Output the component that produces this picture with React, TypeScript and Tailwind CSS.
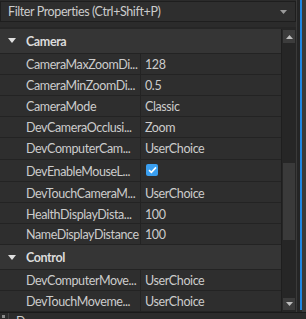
import React from "react";

type Row = { name: string; value?: string; check?: boolean; h: string };

const camera: Row[] = [
  { name: "CameraMaxZoomDi...", value: "128", h: "h-[21px]" },
  { name: "CameraMinZoomDi...", value: "0.5", h: "h-[21px]" },
  { name: "CameraMode", value: "Classic", h: "h-[21px]" },
  { name: "DevCameraOcclusi...", value: "Zoom", h: "h-[21px]" },
  { name: "DevComputerCam...", value: "UserChoice", h: "h-[22px]" },
  { name: "DevEnableMouseL...", check: true, h: "h-[23px]" },
  { name: "DevTouchCameraM...", value: "UserChoice", h: "h-[21px]" },
  { name: "HealthDisplayDista...", value: "100", h: "h-[21px]" },
  { name: "NameDisplayDistance", value: "100", h: "h-[21px]" },
];

const control: Row[] = [
  { name: "DevComputerMove...", value: "UserChoice", h: "h-[21px]" },
  { name: "DevTouchMoveme...", value: "UserChoice", h: "h-[21px]" },
];

function Header({ title }: { title: string }) {
  return (
    <div className="h-[25px] flex items-center bg-[#353535] border-b border-[#232323]">
      <svg width="8" height="5" viewBox="0 0 8 5" className="ml-[8px] mr-[10px]">
        <path d="M0 0 H8 L4 5 Z" fill="#e0e0e0" />
      </svg>
      <span className="font-bold text-[#dcdcdc] pt-[3px]">{title}</span>
    </div>
  );
}

function PropRow({ r }: { r: Row }) {
  return (
    <div className={`${r.h} flex border-b border-[#232323] bg-[#2e2e2e]`}>
      <div className="w-[141px] shrink-0 pl-[26px] pt-[3px] flex items-center border-r border-[#232323] whitespace-nowrap overflow-hidden">
        {r.name}
      </div>
      <div className={`flex-1 pl-[4px] flex items-center whitespace-nowrap ${r.check ? "" : "pt-[3px]"}`}>
        {r.check ? (
          <span className="w-[12px] h-[12px] rounded-[2px] bg-[#3a9ff0] flex items-center justify-center ml-[1px]">
            <svg width="9" height="8" viewBox="0 0 9 8">
              <path d="M1 4.2 L3.4 6.4 L8 1.4" stroke="#ffffff" strokeWidth="1.6" fill="none" />
            </svg>
          </span>
        ) : (
          r.value
        )}
      </div>
    </div>
  );
}

export default function App() {
  return (
    <div
      className="w-[306px] h-[319px] bg-[#2b2b2b] overflow-hidden flex flex-col text-[12.5px] tracking-[-0.4px] text-[#cccccc] leading-none"
      style={{ fontFamily: "Lato, 'Noto Sans', sans-serif" }}
    >
      <div className="h-[312px] flex">
        <div className="w-[296px] flex flex-col">
          <div className="mt-[1px] h-[21px] border border-[#1e1e1e] bg-[#2e2e2e] flex items-center pl-[7px] pr-[8px]">
            <span className="flex-1 whitespace-nowrap pt-[2px]">Filter Properties (Ctrl+Shift+P)</span>
            <svg width="7" height="4" viewBox="0 0 7 4">
              <path d="M0 0 H7 L3.5 4 Z" fill="#9a9a9a" />
            </svg>
          </div>
          <div className="mt-[5px] flex border-t-2 border-[#262626] h-[285px]">
            <div className="w-[281px] flex flex-col overflow-hidden">
              <Header title="Camera" />
              {camera.map((r) => (
                <PropRow key={r.name} r={r} />
              ))}
              <Header title="Control" />
              {control.map((r) => (
                <PropRow key={r.name} r={r} />
              ))}
            </div>
            <div className="w-[15px] bg-[#262626] flex flex-col items-center pt-[1px] pb-[2px] border-l border-[#1e1e1e]">
              <div className="w-[12px] h-[13px] bg-[#3c3c3c] flex items-center justify-center">
                <svg width="7" height="4" viewBox="0 0 7 4">
                  <path d="M0 4 H7 L3.5 0 Z" fill="#bdbdbd" />
                </svg>
              </div>
              <div className="h-[120px]" />
              <div className="w-[12px] h-[77px] bg-[#3a3a3a]" />
              <div className="flex-1" />
              <div className="w-[12px] h-[12px] bg-[#3c3c3c] flex items-center justify-center">
                <svg width="7" height="4" viewBox="0 0 7 4">
                  <path d="M0 0 H7 L3.5 4 Z" fill="#bdbdbd" />
                </svg>
              </div>
            </div>
          </div>
        </div>
        <div className="w-[4px] bg-[#252525] border-l border-[#3a3a3a]" />
        <div className="w-[2px] flex flex-col">
          <div className="h-[310px] bg-[#1e88e5]" />
        </div>
        <div className="w-[4px] bg-[#3a3a3a]" />
      </div>
      <div className="h-[7px] border-t border-[#1a1a1a] bg-[#2b2b2b] flex items-start overflow-hidden">
        <span className="w-[3px] h-[3px] bg-[#8a8a8a] ml-[2px] mt-[2px]" />
        <span className="w-px h-full bg-[#444] ml-[3px]" />
        <span className="ml-[7px] mt-[3px] text-[#cccccc]">D</span>
      </div>
    </div>
  );
}
